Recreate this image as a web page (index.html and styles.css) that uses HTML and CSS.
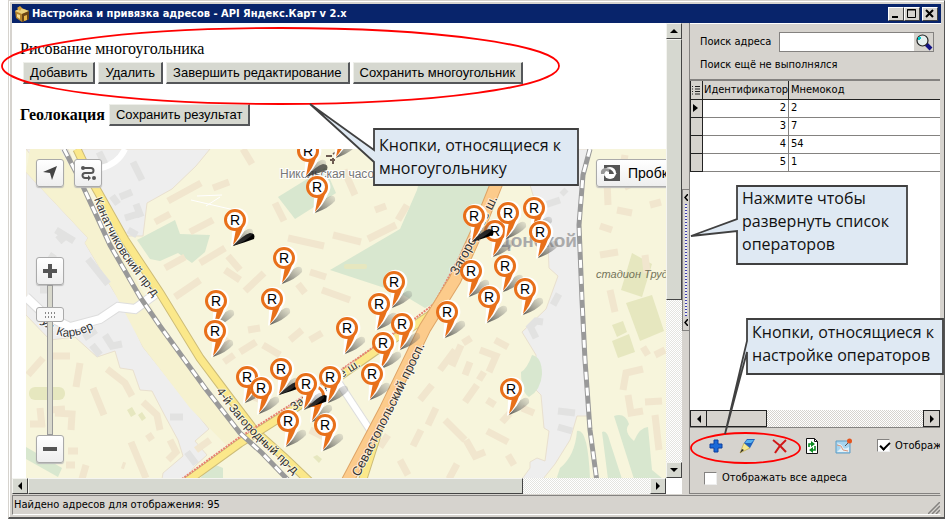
FILE: index.html
```html
<!DOCTYPE html>
<html lang="ru">
<head>
<meta charset="utf-8">
<title>Настройка и привязка адресов - API Яндекс.Карт v 2.x</title>
<link rel="stylesheet" href="styles.css">
</head>
<body>
<div class="window">
  <header class="titlebar">
    <svg class="app-icon" width="16" height="16" viewBox="0 0 16 16"><path d="M1 5l6-3 8 3v8l-7 3-6-4z" fill="#b5852c"/><path d="M1 5l6-3 8 3-7 3z" fill="#ecd27c"/><path d="M8 8l7-3v8l-7 3z" fill="#6b4515"/><path d="M10 10l3-1v5l-3 1z" fill="#e9b94a"/><path d="M3 2l3-2 2 2-2 3z" fill="#d8a13a"/><path d="M3 8l3 1v4l-3-2z" fill="#f3dc93"/></svg>
    <h1 class="title">Настройка и привязка адресов - API Яндекс.Карт v 2.x</h1>
    <button class="win-btn" aria-label="Свернуть"><svg width="12" height="11" viewBox="0 0 12 11"><path d="M2 9h6" stroke="#000" stroke-width="2"/></svg></button>
    <button class="win-btn" aria-label="Развернуть"><svg width="12" height="11" viewBox="0 0 12 11"><path d="M1.500 1.500h8v8h-8zM1 2h9" fill="none" stroke="#000"/></svg></button>
    <button class="win-btn close" aria-label="Закрыть"><svg width="12" height="11" viewBox="0 0 12 11"><path d="M2 2l7 7M9 2l-7 7" stroke="#000" stroke-width="2"/></svg></button>
  </header>

  <main class="main">
    <section class="browser">
      <div class="page">
        <p class="caption">Рисование многоугольника</p>
        <div class="row polygon-row">
          <button class="btn">Добавить</button>
          <button class="btn">Удалить</button>
          <button class="btn">Завершить редактирование</button>
          <button class="btn">Сохранить многоугольник</button>
        </div>
        <div class="row geo-row">
          <b class="geo">Геолокация</b>
          <button class="btn">Сохранить результат</button>
        </div>
        <div class="map">
          <svg class="map-canvas" viewBox="26 149 640 330" preserveAspectRatio="xMinYMin slice">
            <defs>
              <g id="shade"><path d="M-2 26Q4 13 13 9Q19 8 18 14Q12 21 -2 26z" fill="url(#fade)"/></g>
              <g id="dark"><path d="M-2 26Q8 15 15 13Q21 13 19 19Q11 22 -2 26z" fill="#000"/></g>
              <g id="drop">
                <use href="#shade"/>
                <path d="M-4 27Q-3 18 -3 11A12 12 0 1 1 11 7Q7 18 -4 27z" fill="#fff"/>
                <path d="M-2 25L1 9L8 7Q5 17 -2 25z" fill="#e8701a"/>
                <circle r="9.500" fill="#fff" stroke="#e8701a" stroke-width="3"/>
              </g>
              <g id="pin">
                <use href="#drop"/>
                <text class="pin-label" y="5" text-anchor="middle">R</text>
              </g>
              <linearGradient id="fade" x1="0" y1="1" x2="1" y2="0"><stop offset="0" stop-color="#333" stop-opacity=".8"/><stop offset="1" stop-color="#777" stop-opacity=".15"/></linearGradient>
              <path id="p1" d="M94 199Q107 234 122 256T158 302"/>
              <path id="p2" d="M216 391Q235 419 256 439T305 485"/>
              <path id="p3" d="M41 322Q55 340 74 336T116 315"/>
              <path id="p4" d="M359 477Q392 415 432 330"/>
              <path id="p5" d="M457 276Q480 235 504 185"/>
              <path id="p6" d="M294 411Q325 388 380 354"/>
            </defs>
            <rect x="26" y="149" width="900" height="500" fill="#f7f5dc"/>
            <g fill="#eee" stroke="#e9e0cf">
              <path d="M80 149H210L196 166L172 189L147 203L143 236L123 236z"/>
              <path d="M26 172L88 238L85 243L113 290L127 312L143 347L209 429L195 441L207 455L196 465L184 479H162L163 473L183 456L178 440L165 416L152 391L140 390L133 370L120 368L115 351L97 357L75 337L50 340L26 315z"/>
              <path d="M26 149H68L76 170L60 180L30 165L35 160z"/>
              <path d="M536 149H590L583 175L580 230L585 340L589 416H577L570 440L555 464L543 479H522L530 468V462L537 458L545 461L549 431L544 428L541 395L536 390V355L522 332L546 309L558 276L549 268L548 245L530 185z"/>
            </g>
            <path d="M30 149H60L165 330L240 438L227 446L190 408L143 347L113 290L85 243L88 238L26 172z" fill="#f6f2d0"/>
            <g fill="#d8e7cf">
              <path d="M137 240L175 220L180 234L210 235L205 252L192 263L178 253L160 261L150 259z"/>
              <path d="M278 197L325 168L336 193L295 219z"/>
              <path d="M427 149H506L480 215L439 301L425 308L400 293L330 270L400 229L417 190z"/>
              <path d="M26 447L62 468L58 477L26 459z"/>
              <path d="M200 479L211 463L223 468V479z"/>
              <path d="M521 372Q527 369 532 355Q542 357 542 374Q541 390 529 397Q521 392 521 372z"/>
              <path d="M557 477L560 468Q575 456 577 431Q588 428 590 479H558z"/>
              <path d="M602 432Q607 429 610 442L622 479H608z"/>
              <path d="M614 416Q625 412 629 424Q623 432 634 441Q640 427 648 427L652 470L663 479H634z"/>
            </g>
            <g fill="#e6e7bf">
              <path d="M632 253L652 264L642 297L621 290z"/><path d="M626 303L652 295L664 331L640 341z"/><path d="M612 325L623 321L627 332L617 337z"/><path d="M612 341L629 334L635 352L618 358z"/>
              <rect x="29" y="387" width="36" height="13" rx="6"/><rect x="344" y="264" width="23" height="5" rx="2"/><path d="M127 410l5-3 4 7-5 3zM138 415l4-3 4 6-4 3zM313 457l4-2 5 4-3 4z"/>
            </g>
            <path class="bld" d="M168 201L201 183M213 188L229 182M155 222L170 214M190 232L213 220M165 268L185 257M175 297L200 280M200 263L225 248M225 270L240 280M243 149L252 164M275 203L284 221M288 238L324 246M333 235L361 242M368 239L396 225M375 210L386 206M398 220L407 205M310 272L326 277M322 290L350 300M298 284L305 293M245 291L264 273M228 256L240 270M344 170L355 195M263 345L280 355M310 340L322 333M240 352L256 342M248 330L260 328M310 430L330 440M290 340L302 330M250 395L265 402M380 447L388 435M400 385L410 370M420 400L432 385M440 370L455 350M445 420L465 440M400 460L408 475M452 366L461 345M463 343L471 338M480 350L496 356L489 372M495 340L508 347M465 375L470 362M479 380L484 372M465 402L477 385M487 431L508 442M466 440L475 456L485 452M508 455L514 465M487 400L495 405M522 408L534 413M502 422L510 413M428 425L436 408M413 446L421 430M449 479L457 464"/>
            <path class="bld" d="M623 390L626 373L643 369M628 395L631 413L643 411M645 402L662 401M655 415L659 450M643 347L648 355M655 355L665 350M607 180L608 205M625 155L622 172M617 210L632 213M625 181L629 189M650 205L661 202M600 226L612 230M600 255L618 252M645 255L647 273M610 290L615 312M28 375L43 358M50 356L70 356M80 363L76 387M93 388L104 415M107 369L125 383L132 396M143 402L157 415L160 430M131 442L146 478M30 424L45 424M40 408L42 427M55 413L72 414L71 430M50 410L65 409M68 451L78 451M66 465H75M86 465L82 479M170 440L176 452L168 460M196 450L210 440M148 434l4 6M122 465l3 1M218 350L228 338M224 362L234 355"/>
            <path class="gray" d="M133 162L142 180M99 152L106 166M112 196L118 204M120 197L132 192M136 204L141 217M125 218L138 214M128 230L137 235M56 230L74 241M58 235L64 242M88 259L108 284M45 268L54 254M40 290L47 290M84 338L96 330M92 345L100 355M105 335L112 346L122 344M170 417L183 417M187 452L196 464M528 329L536 321L543 322M530 326L536 338M558 411L575 413M558 427L572 431M562 190L566 194M545 205L560 200M553 305L559 294"/>

            <path d="M26 297L45 315L70 327L100 319L118 307L135 309L158 292" class="edge w9"/><path d="M26 297L45 315L70 327L100 319L118 307L135 309L158 292" class="white w8"/>
            <path d="M125 149Q118 164 101 168" class="white w6"/>
            <path d="M191 200L243 212M206 206L220 197M197 196L222 195" class="white w1"/>
            <path d="M339 383L370 430" class="edge w8"/><path d="M339 383L370 430" class="white w6"/>

            <path d="M77 149L93 183L125 240L160 293L200 358L230 398L255 431L285 458L310 482" class="yedge"/><path d="M77 149L93 183L125 240L160 293L200 358L230 398L255 431L285 458L310 482" class="yellow"/>
            <path d="M362 482L385 410L420 340" class="yedge"/><path d="M362 482L385 410L420 340" class="yellow"/>
            <path d="M186 482L240 443L300 405L330 383L380 348L415 325L436 311" class="yedge"/><path d="M186 482L240 443L300 405L330 383L380 348L415 325L436 311" class="yellow"/>
            <path d="M182 479L237 439L298 400L328 379L378 344L413 320L434 304L470 238L500 170L506 149" class="red"/>
            <path d="M347 482L385 410L425 328L455 280L480 225L500 175L510 145" class="oedge"/><path d="M347 482L385 410L425 328L455 280L480 225L500 175L510 145" class="orange"/>
            <path d="M64 149L80 180L110 245L140 297L160 326L205 388L240 433L262 453L288 480" class="rail"/><path d="M64 149L80 180L110 245L140 297L160 326L205 388L240 433L262 453L288 480" class="ties"/>
            <path d="M590 149L583 175L579 225L582 300L585 360L590 430L597 482" class="rail"/><path d="M590 149L583 175L579 225L582 300L585 360L590 430L597 482" class="ties"/>

            <g class="street">
              <text><textPath href="#p1">Канатчиковский пр-д</textPath></text>
              <text><textPath href="#p2">4-й Загородный пр-д</textPath></text>
              <text><textPath href="#p3">ул. Карьер</textPath></text>
              <text class="major"><textPath href="#p4">Севастопольский просп.</textPath></text>
              <text class="major"><textPath href="#p5">Загородное ш.</textPath></text>
              <text><textPath href="#p6">Загородное ш.</textPath></text>
            </g>
            <text x="280" y="178" class="place">Никольская часовня</text>
            <path d="M326 156h6M333 154l5-3M333 158v6M330 160h5" stroke="#6d5b52" stroke-width="2"/>
            <text x="497" y="247" class="district">Донской</text>
            <text x="596" y="278" class="stadium">стадион Труд</text>

            <use href="#drop" x="338" y="132"/><use href="#dark" x="308" y="151" opacity=".6"/><use href="#pin" x="308" y="151"/><use href="#pin" x="317" y="187"/>
            <use href="#dark" x="235" y="220"/><use href="#pin" x="235" y="220"/><use href="#pin" x="284" y="258"/><use href="#pin" x="272" y="299"/><use href="#pin" x="216" y="301"/><use href="#pin" x="215" y="331"/>
            <use href="#pin" x="394" y="282"/><use href="#pin" x="379" y="304"/><use href="#pin" x="402" y="324"/><use href="#pin" x="347" y="328"/><use href="#pin" x="383" y="343"/><use href="#pin" x="447" y="312"/>
            <use href="#pin" x="534" y="208"/><use href="#pin" x="495" y="231"/><use href="#pin" x="508" y="213"/><use href="#dark" x="474" y="216"/><use href="#pin" x="474" y="216"/><use href="#pin" x="540" y="232"/>
            <use href="#pin" x="505" y="266"/><use href="#pin" x="471" y="271"/><use href="#pin" x="525" y="289"/><use href="#pin" x="489" y="297"/>
            <use href="#pin" x="247" y="377"/><use href="#pin" x="261" y="388"/><use href="#dark" x="281" y="369"/><use href="#pin" x="281" y="369"/>
            <use href="#drop" x="314" y="396"/><use href="#dark" x="309" y="382"/><use href="#pin" x="306" y="384"/><use href="#pin" x="330" y="377"/><use href="#pin" x="372" y="374"/>
            <use href="#pin" x="288" y="421"/><use href="#pin" x="325" y="425"/><use href="#pin" x="511" y="389"/>
          </svg>
          <div class="map-tools">
            <button class="map-btn" aria-label="Моё местоположение"><svg width="16" height="16" viewBox="0 0 16 16"><path d="M15 1L10 15L8 8L1 7z" fill="#444"/></svg></button>
            <button class="map-btn" aria-label="Маршрут"><svg width="16" height="16" viewBox="0 0 16 16"><path d="M3 3h8a2.500 2.500 0 0 1 0 5H5a2.500 2.500 0 0 0 0 5h3" fill="none" stroke="#555" stroke-width="2"/><circle cx="3" cy="3" r="2" fill="#555"/><circle cx="14" cy="13" r="2" fill="#555"/><path d="M8 10l3 3-3 3z" fill="#555"/></svg></button>
          </div>
          <div class="zoom">
            <button class="map-btn" aria-label="Приблизить"><svg width="16" height="16" viewBox="0 0 16 16"><path d="M8 1v14M1 8h14" stroke="#555" stroke-width="4"/></svg></button>
            <div class="rail-bar"><button class="thumb" aria-label="Масштаб"></button></div>
            <button class="map-btn" aria-label="Отдалить"><svg width="16" height="16" viewBox="0 0 16 16"><path d="M1 8h14" stroke="#555" stroke-width="4"/></svg></button>
          </div>
          <button class="map-btn traffic"><svg width="22" height="18" viewBox="0 0 22 18"><path d="M5 1h16v16H5z" fill="#555"/><circle cx="11" cy="9" r="6" fill="#fff"/><path d="M3 10a6 6 0 0 1 8-6q4 1 4 5h3l-5 4-4-4h2q-1-3-4-2-3 1-1 5z" fill="#fff"/><path d="M2 10q-1-5 4-6l6 1-2 3-3-1-2 3z" fill="#999"/><path d="M10 6v4h5q-2-5-5-4z" fill="#555"/></svg>Пробки</button>
        </div>
      </div>
      <div class="vbar">
        <button class="arrow" aria-label="Вверх"><svg width="8" height="4"><path d="M4 0l4 4H0z"/></svg></button>
        <div class="bar-thumb"></div>
        <div class="space"></div>
        <button class="arrow" aria-label="Вниз"><svg width="8" height="4"><path d="M0 0h8L4 4z"/></svg></button>
      </div>
      <div class="hbar">
        <button class="arrow" aria-label="Влево"><svg width="4" height="8"><path d="M4 0v8L0 4z"/></svg></button>
        <div class="bar-thumb"></div>
        <div class="space"></div>
        <button class="arrow" aria-label="Вправо"><svg width="4" height="8"><path d="M0 0l4 4-4 4z"/></svg></button>
      </div>
    </section>

    <div class="splitter">
      <button class="grip" aria-label="Развернуть список операторов">
        <svg width="4" height="7"><path d="M4 0L1 3.500L4 7" fill="none" stroke="#000" stroke-width="1.500"/></svg>
        <span class="dots"></span>
        <svg width="4" height="7"><path d="M4 0L1 3.500L4 7" fill="none" stroke="#000" stroke-width="1.500"/></svg>
      </button>
    </div>

    <aside class="side">
      <div class="search">
        <div class="search-row">
          <label for="q">Поиск адреса</label>
          <div class="field">
            <input id="q" type="text">
            <button class="find" aria-label="Найти"><svg width="18" height="17" viewBox="0 0 18 17"><path d="M11 10l5 5" stroke="#111184" stroke-width="4"/><circle cx="7.500" cy="6.500" r="5.500" fill="#e4eeee" stroke="#222" stroke-width="1.200"/><path d="M4 6V4h2" stroke="#0cc" stroke-width="2" fill="none"/></svg></button>
          </div>
        </div>
        <p>Поиск ещё не выполнялся</p>
      </div>
      <div class="grid">
        <table>
          <thead><tr><th class="ind"><svg width="9" height="10"><path d="M0 1.500h1M3 1.500h5M0 4h1M3 4h5M0 6.500h1M3 6.500h5M0 9h1M3 9h5" stroke="#222"/></svg></th><th class="id">Идентификатор</th><th>Мнемокод</th></tr></thead>
          <tbody>
            <tr><td class="ind"><svg width="6" height="8"><path d="M1 0l5 4-5 4z"/></svg></td><td class="id">2</td><td>2</td></tr>
            <tr><td class="ind"></td><td class="id">3</td><td>7</td></tr>
            <tr><td class="ind"></td><td class="id">4</td><td>54</td></tr>
            <tr><td class="ind"></td><td class="id">5</td><td>1</td></tr>
          </tbody>
        </table>
      </div>
      <div class="gridbar">
        <button class="flat" aria-label="Влево"><svg width="4" height="8"><path d="M4 0v8L0 4z"/></svg></button>
        <div class="flat-thumb"></div>
        <div class="space"></div>
        <button class="flat" aria-label="Вправо"><svg width="4" height="8"><path d="M0 0l4 4-4 4z"/></svg></button>
      </div>
      <div class="tools">
        <div class="tool-row">
          <button class="tool" aria-label="Добавить"><svg width="16" height="16" viewBox="0 0 16 16"><path d="M6 2h4v4h4v4h-4v4H6v-4H2V6h4z" fill="#1b6ad8" stroke="#0c3f9e"/></svg></button>
          <button class="tool" aria-label="Изменить"><svg width="18" height="16" viewBox="0 0 18 16"><path d="M1 15L5 5l6 5z" fill="#f5e88e" stroke="#b79d3a" stroke-width=".6"/><path d="M5 5l3-4h8l-5 9z" fill="#1f62bd"/><path d="M8 2h7l-3 3H6z" fill="#57b0f0"/><path d="M1 15l2-4 2 1z" fill="#222"/></svg></button>
          <button class="tool" aria-label="Удалить"><svg width="16" height="16" viewBox="0 0 16 16"><path d="M1 2q7 5 13 12M14 2Q7 8 3 15" fill="none" stroke="#d01818" stroke-width="2"/></svg></button>
          <button class="tool" aria-label="Обновить"><svg width="16" height="16" viewBox="0 0 16 16"><path d="M2.500.5h8l3 3v12h-11z" fill="#fff" stroke="#111"/><path d="M10.500.5v3h3" fill="none" stroke="#111"/><path d="M5 9V6h3M11 8v4H8" fill="none" stroke="#0a8a20" stroke-width="1.600"/><path d="M7 3l4 3-4 3zM9 9l-4 3 4 3z" fill="#0a8a20"/></svg></button>
          <button class="tool" aria-label="Показать на карте"><svg width="18" height="16" viewBox="0 0 18 16"><path d="M1 3h14v12H1z" fill="#a8d4ee" stroke="#5f9dc5"/><path d="M2 5q5 1 6 4t6 0v5H2l4-4z" fill="#e4f1f8"/><path d="M2 7l4 1 2 4 5 1" fill="none" stroke="#d9977c"/><path d="M10 8l4-4" stroke="#555"/><circle cx="14.500" cy="3" r="2.500" fill="#e4541e"/></svg></button>
          <label class="check"><input type="checkbox" checked>Отображать</label>
        </div>
        <label class="check all"><input type="checkbox">Отображать все адреса</label>
      </div>
    </aside>
  </main>

  <footer class="status">
    <span>Найдено адресов для отображения: 95</span>
    <svg width="12" height="12"><path d="M0 12L12 0M4 12l8-8M8 12l4-4" stroke="#848280" stroke-width="1.500"/></svg>
  </footer>
</div>

<svg class="marks" width="945" height="519" viewBox="0 0 945 519">
  <g fill="none" stroke="#f00" stroke-width="1.800"><ellipse cx="280.500" cy="66" rx="278.500" ry="38"/><ellipse cx="745.500" cy="448" rx="54.500" ry="15"/></g>
  <g fill="#dfe9f3" stroke="#404040" stroke-width="1.800">
    <path d="M374 129H578V185H374V162L310 104L374 150z"/>
    <path d="M737 186H907V264H737V231L691 236L737 219z"/>
    <path d="M747 319H943V374H747V352L725 434L747 341z"/>
  </g>
</svg>
<div class="note note-polygon">Кнопки, относящиеся к<br>многоугольнику</div>
<div class="note note-list">Нажмите чтобы<br>развернуть список<br>операторов</div>
<div class="note note-operators">Кнопки, относящиеся к<br>настройке операторов</div>
</body>
</html>
```
FILE: styles.css
```css
* { box-sizing: border-box; }
body {
  margin: 0;
  background: #fff;
  font: 11px/14px "DejaVu Sans Condensed", "DejaVu Sans", sans-serif;
  color: #000;
  overflow: hidden;
}
button { font: inherit; color: inherit; padding: 0; margin: 0; display: flex; align-items: center; justify-content: center; }
p, h1 { margin: 0; }

.window {
  display: grid;
  grid-template-rows: 19px 1fr 20px;
  height: 100vh;
  margin-left: 8px;
  padding: 3px 3px 2px;
  background: #d6d3ce;
  border: 1px solid #d6d3ce;
  border-right-color: #555;
  border-bottom: 2px solid #555;
  box-shadow: inset 1px 1px #fff;
}

.titlebar { display: flex; align-items: center; padding: 0 3px 0 2px; background: #08246b; color: #fff; }
.app-icon { margin-right: 2px; }
.title { flex: 1; font-size: 11px; font-weight: bold; white-space: nowrap; }
.win-btn { width: 16px; height: 14px; background: #d6d3ce; border: 1px solid; border-color: #fff #404040 #404040 #fff; }
.close { margin-left: 2px; }

.main { display: grid; grid-template-columns: minmax(0, 1fr) 8px 251px; min-height: 0; padding-bottom: 1px; }

.browser { display: grid; grid-template: minmax(0, 1fr) 16px / minmax(0, 1fr) 16px; background: #fff; min-height: 0; }
.page { display: flex; flex-direction: column; min-height: 0; padding: 17px 0 0 8px; overflow: hidden; font: 16px/18px "Liberation Serif", serif; }
.row { display: flex; align-items: center; gap: 4px; }
.polygon-row { padding: 4px 3px 0; gap: 3px; }
.geo-row { padding-top: 20px; }
.btn {
  height: 22px;
  padding: 0 6px;
  font: 13px/16px "Liberation Sans", sans-serif;
  background: #d6d8d0;
  border: 1px solid;
  border-color: #eeefea #55575a #55575a #eeefea;
  border-right-width: 2px;
  border-bottom-width: 2px;
  white-space: nowrap;
}

.map { position: relative; flex: 1; min-height: 0; margin: 23px 0 0 6px; overflow: hidden; font: 13px/16px "Liberation Sans", sans-serif; }
.map-canvas { display: block; width: 100%; height: 100%; }
.pin-label { font: 14px "Liberation Sans", sans-serif; }
.bld { fill: none; stroke: #f1e6ce; stroke-width: 7; }
.gray { fill: none; stroke: #e2e2e1; stroke-width: 7; }
.edge { fill: none; stroke: #ddd; }
.white { fill: none; stroke: #fff; }
.w1 { stroke-width: 1; }
.w6 { stroke-width: 6; }
.w8 { stroke-width: 8; }
.w9 { stroke-width: 10; }
.yedge { fill: none; stroke: #cdbc78; stroke-width: 9; }
.yellow { fill: none; stroke: #fbe88a; stroke-width: 7; }
.oedge { fill: none; stroke: #dfa566; stroke-width: 13; }
.orange { fill: none; stroke: #fccb8b; stroke-width: 11; }
.red { fill: none; stroke: #e88070; stroke-width: 2; stroke-dasharray: 2 1; }
.rail { fill: none; stroke: #999; stroke-width: 5; }
.ties { fill: none; stroke: #fff; stroke-width: 3; stroke-dasharray: 8 8; }
.street text { fill: #333; stroke: #fff; stroke-opacity: .6; stroke-width: 2; paint-order: stroke; font-size: 12px; }
.street .major { font-size: 13px; }
.place { fill: #777; font-size: 12px; stroke: #fff; stroke-width: 2; paint-order: stroke; }
.district { fill: #aaa; font-size: 19px; font-weight: bold; }
.stadium { fill: #74745a; font-size: 11px; font-style: italic; }

.map-btn { width: 28px; height: 28px; background: linear-gradient(#fff, #eee); border: 1px solid #aaa; border-radius: 3px; box-shadow: 0 1px 1px #bbb; }
.map-tools { position: absolute; left: 10px; top: 10px; display: flex; gap: 10px; }
.zoom { position: absolute; left: 10px; top: 108px; bottom: 15px; width: 28px; display: flex; flex-direction: column; align-items: center; }
.rail-bar { flex: 1; width: 6px; border: 1px solid #999; background: #d8d8cc; display: flex; justify-content: center; }
.thumb { flex: none; width: 28px; height: 15px; margin-top: 21px; padding: 3px 7px; border: 1px solid #aaa; border-radius: 3px; background: radial-gradient(#888 30%, transparent 40%) 0 0 / 3px 4px content-box, #f8f8f8; }
.traffic { position: absolute; top: 10px; right: -22px; width: 92px; justify-content: flex-start; gap: 7px; padding-left: 2px; font-size: 14px; }

.vbar, .hbar { display: flex; background: repeating-conic-gradient(#fff 0 25%, #e4e4e0 0 50%) 0 0 / 2px 2px; }
.vbar { flex-direction: column; }
.arrow { flex: none; width: 16px; height: 16px; background: #d6d8d0; border: 1px solid; border-color: #f4f4f0 #444 #444 #f4f4f0; }
.bar-thumb { background: #d6d8d0; border: 1px solid; border-color: #f4f4f0 #444 #444 #f4f4f0; }
.vbar .bar-thumb { flex: 261; }
.vbar .space { flex: 163; }
.hbar .bar-thumb { flex: 495; }
.hbar .space { flex: 127; }

.splitter { display: flex; flex-direction: column; padding-top: 166px; border-right: 1px solid #848280; }
.grip { width: 7px; height: 142px; flex-direction: column; padding: 4px 0; background: #d6d3ce; border: 1px solid #848280; border-right: 0; gap: 3px; }
.dots { flex: 1; width: 2px; background: repeating-linear-gradient(#3b3bb0 0 1px, #eee 1px 3px); }

.side { display: flex; flex-direction: column; min-width: 0; padding-right: 1px; overflow: hidden; border-top: 1px solid #fff; }
.search { padding: 8px 6px 7px 10px; border-bottom: 2px solid #848280; }
.search-row { display: flex; align-items: center; gap: 8px; margin-bottom: 6px; }
.search label { white-space: nowrap; }
.field { flex: 1; display: flex; min-width: 0; height: 20px; background: #fff; border: 1px solid #848280; }
.field input { flex: 1; min-width: 0; border: 0; padding: 0 3px; font: inherit; }
.find { width: 19px; background: #d6d3ce; border: 0; }
.grid { flex: 1; background: #fff; min-height: 0; }
table { width: 100%; border-collapse: collapse; table-layout: fixed; border-left: 1px solid #222; }
th, td { height: 18px; padding: 0 2px; line-height: 16px; border: 1px solid #848280; border-right: 0; text-align: left; font-weight: normal; }
th { background: #d6d3ce; border-color: #222; border-top: 0; overflow: hidden; }
.ind { width: 12px; padding: 0 1px; background: #d6d3ce; border-color: #222; border-right: 1px solid #222; }
.ind svg { display: block; }
.id { width: 86px; text-align: right; }
th.id { padding: 0 1px; text-align: left; }
.gridbar { display: flex; height: 17px; background: repeating-conic-gradient(#fff 0 25%, #d6d3ce 0 50%) 0 0 / 2px 2px; }
.flat { flex: none; width: 17px; height: 17px; background: #d6d3ce; border: 1px solid #222; }
.flat-thumb { flex: 59; background: #d6d3ce; border: 1px solid #222; border-left: 0; }
.gridbar .space { flex: 157; }
.tools { height: 67px; border-top: 1px solid #848280; border-bottom: 1px solid #848280; overflow: hidden; }
.tool-row { display: flex; align-items: center; height: 35px; padding-left: 17px; gap: 14px; white-space: nowrap; }
.tool { flex: none; width: 18px; height: 18px; border: 0; background: none; }
.check { display: flex; align-items: center; gap: 5px; white-space: nowrap; }
.tool-row .check { margin-left: 10px; }
.all { padding: 8px 0 0 14px; }
.check input { appearance: none; width: 13px; height: 13px; margin: 0; background: #fff; border: 1px solid; border-color: #848280 #eee #eee #848280; flex: none; }
.check input:checked::before { content: ""; display: block; width: 8px; height: 4px; margin: 2px 0 0 2px; border: solid #000; border-width: 0 0 2px 2px; transform: rotate(-45deg); }

.status { display: flex; align-items: center; justify-content: space-between; padding: 0 0 0 1px; border: 1px solid #848280; border-color: #848280 #d6d3ce #fff #848280; }
.status svg { align-self: flex-end; }

.marks { position: absolute; left: 0; top: 0; pointer-events: none; }
.note { position: absolute; font: 16px/23px "Open Sans", "Noto Sans", sans-serif; color: #111; white-space: nowrap; pointer-events: none; }
.note-polygon { left: 379px; top: 134px; }
.note-list { left: 742px; top: 187px; }
.note-operators { left: 752px; top: 321px; }
```
